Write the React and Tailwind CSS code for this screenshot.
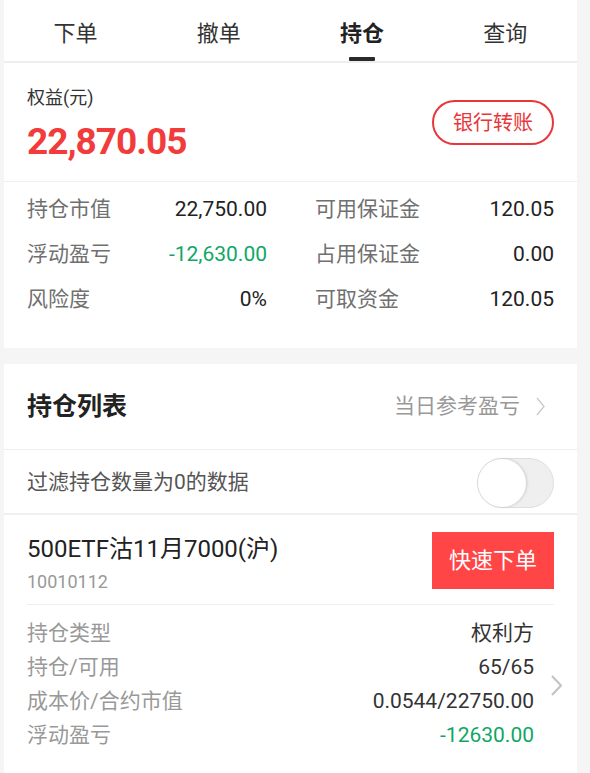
const tabs = ['下单', '撤单', '持仓', '查询'];

const summary = [
  { l: '持仓市值', v: '22,750.00', r: '可用保证金', rv: '120.05' },
  { l: '浮动盈亏', v: '-12,630.00', green: true, r: '占用保证金', rv: '0.00' },
  { l: '风险度', v: '0%', r: '可取资金', rv: '120.05' },
];

const details = [
  { l: '持仓类型', v: '权利方' },
  { l: '持仓/可用', v: '65/65' },
  { l: '成本价/合约市值', v: '0.0544/22750.00' },
  { l: '浮动盈亏', v: '-12630.00', green: true },
];

const Chevron = ({ className, w = 10, h = 20, sw = 1.5 }) => (
  <svg className={className} width={w} height={h} viewBox={`0 0 ${w} ${h}`} fill="none">
    <polyline points={`1,1 ${w - 1},${h / 2} 1,${h - 1}`} stroke="currentColor" strokeWidth={sw} strokeLinejoin="miter" />
  </svg>
);

export default function App() {
  return (
    <div className="min-h-[773px] bg-[#f5f5f5] pl-[4px] pr-[13px] font-['Roboto','Noto_Sans_CJK_SC',sans-serif]">
      <div className="bg-white">
        {/* Tabs */}
        <div className="grid grid-cols-4 border-b-2 border-[#eeeeee]">
          {tabs.map((t, i) => (
            <div key={t} className="relative flex h-[61px] items-center justify-center pt-[5px]">
              <span className={i === 2 ? 'text-[22px] font-bold text-[#222]' : 'text-[22px] text-[#333]'}>{t}</span>
              {i === 2 && <div className="absolute bottom-0 h-[4px] w-[26px] rounded-[1px] bg-[#2a2a2a]" />}
            </div>
          ))}
        </div>

        {/* Equity */}
        <div className="flex h-[118px] items-center justify-between px-[23px]">
          <div className="flex flex-col pt-[6px]">
            <span className="text-[18px] leading-6 text-[#333]">权益(元)</span>
            <span className="mt-[10px] text-[37px] font-bold leading-[44px] tracking-[-1px] text-[#f23c3c]">22,870.05</span>
          </div>
          <button className="mt-[1px] h-[45px] w-[122px] rounded-full border-2 border-[#e8373a] text-[20px] text-[#e8373a]">
            银行转账
          </button>
        </div>
        <div className="h-px bg-[#f0f0f0]" />
        <div className="px-[23px] pb-[26px] pt-[5px]">
          {summary.map((row) => (
            <div key={row.l} className="flex h-[45px] items-center text-[21px]">
              <span className="w-[100px] text-[#707070]">{row.l}</span>
              <span className={`w-[140px] text-right ${row.green ? 'text-[#0fa765]' : 'text-[#222]'}`}>{row.v}</span>
              <span className="ml-[48px] flex-1 text-[#707070]">{row.r}</span>
              <span className="text-right text-[#222]">{row.rv}</span>
            </div>
          ))}
        </div>
      </div>

      <div className="h-[16px]" />

      <div className="bg-white pb-[24px]">
        {/* List header */}
        <div className="flex h-[86px] items-center justify-between border-b border-[#eeeeee] pl-[23px] pr-[32px]">
          <span className="text-[25px] font-bold text-[#222]">持仓列表</span>
          <div className="flex items-center gap-[16px] text-[21px] text-[#999]">
            <span>当日参考盈亏</span>
            <Chevron className="text-[#c8c8c8]" w={9} h={19} sw={1.3} />
          </div>
        </div>

        {/* Filter */}
        <div className="flex h-[65px] items-center justify-between border-b-2 border-[#f0f0f0] px-[23px] pt-[3px]">
          <span className="text-[21px] text-[#555]">过滤持仓数量为0的数据</span>
          <div className="relative h-[50px] w-[77px] rounded-full border border-[#dedede] bg-[#efefef]">
            <div className="absolute left-0 top-0 h-[48px] w-[48px] rounded-full bg-white shadow-[1px_0_3px_rgba(0,0,0,0.15)]" />
          </div>
        </div>

        {/* Position card */}
        <div className="flex h-[89px] items-start justify-between px-[23px] pt-[17px]">
          <div className="flex flex-col pt-[3px]">
            <span className="text-[24px] leading-[28px] text-[#222]">500ETF沽11月7000(沪)</span>
            <span className="mt-[8px] text-[18px] leading-[22px] text-[#999]">10010112</span>
          </div>
          <button className="h-[57px] w-[122px] bg-[#ff4545] text-[22px] text-white">快速下单</button>
        </div>
        <div className="mx-[23px] h-px bg-[#eeeeee]" />
        <div className="flex items-center pl-[23px] pr-[15px] pt-[12px]">
          <div className="flex-1">
            {details.map((d) => (
              <div key={d.l} className="flex h-[34px] items-center justify-between text-[21px]">
                <span className="text-[#999]">{d.l}</span>
                <span className={d.green ? 'text-[#0fa765]' : 'text-[#333]'}>{d.v}</span>
              </div>
            ))}
          </div>
          <Chevron className="ml-[17px] text-[#c4c4c4]" w={11} h={21} sw={2.2} />
        </div>
      </div>
    </div>
  );
}
